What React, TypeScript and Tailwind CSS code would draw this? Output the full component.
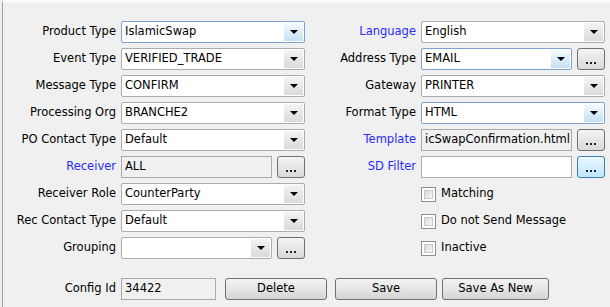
import React from 'react';

type ComboProps = { value: string; hot?: boolean; narrow?: boolean };

const Arrow = () => (
  <svg width="8" height="4" viewBox="0 0 8 4">
    <path d="M0 0H8L4 4Z" fill="#000" />
  </svg>
);

const Combo: React.FC<ComboProps> = ({ value, hot, narrow }) => (
  <div
    className={`flex h-[22px] ${narrow ? 'w-[151px]' : 'w-[184px]'} rounded-[2px] border ${
      hot ? 'border-[#7da2ce]' : 'border-[#acacac]'
    } bg-white p-px`}
  >
    <div className="flex flex-1 items-center pl-[2px] whitespace-nowrap overflow-hidden">{value}</div>
    <div
      className={`flex w-[19px] items-center justify-center bg-linear-to-b ${
        hot ? 'from-[#f6fbfe] to-[#c4e1f5]' : 'from-[#f4f4f4] to-[#dadada]'
      }`}
    >
      <Arrow />
    </div>
  </div>
);

const Dots: React.FC<{ hot?: boolean }> = ({ hot }) => (
  <div
    className={`flex h-[22px] w-[28px] items-end justify-center rounded-[3px] border pb-[5px] bg-linear-to-b ${
      hot ? 'border-[#3c7fb1] from-[#eaf6fd] to-[#bee6fd]' : 'border-[#707070] from-[#f4f4f4] to-[#d9d9d9]'
    }`}
  >
    <div className="flex gap-[2px]">
      <span className="h-[2px] w-[2px] bg-[#222]" />
      <span className="h-[2px] w-[2px] bg-[#222]" />
      <span className="h-[2px] w-[2px] bg-[#222]" />
    </div>
  </div>
);

const Field: React.FC<{ value?: string; gray?: boolean; w: string }> = ({ value, gray, w }) => (
  <div
    className={`flex h-[22px] ${w} items-center overflow-hidden whitespace-nowrap border pl-[3px] ${
      gray ? 'border-[#a9a9a9] bg-[#f0f0f0]' : 'border-[#abadb3] bg-white'
    }`}
  >
    {value}
  </div>
);

const Check: React.FC<{ label: string }> = ({ label }) => (
  <div className="flex items-center gap-[5px]">
    <div className="h-[15px] w-[15px] border border-[#8f8f8f] bg-white p-[2px]">
      <div className="h-full w-full border border-[#c8c8c8] bg-linear-to-br from-[#d9d9d9] to-[#f7f7f7]" />
    </div>
    <span>{label}</span>
  </div>
);

const Row: React.FC<{ label?: string; blue?: boolean; lw: string; children: React.ReactNode }> = ({
  label,
  blue,
  lw,
  children,
}) => (
  <div className="flex h-[22px] items-center gap-[5px]">
    <div className={`${lw} text-right ${blue ? 'text-[#2a2aff]' : ''}`}>{label}</div>
    {children}
  </div>
);

const Btn: React.FC<{ label: string; w: string }> = ({ label, w }) => (
  <div
    className={`flex h-[22px] ${w} items-center justify-center rounded-[3px] border border-[#707070] bg-linear-to-b from-[#f3f3f3] via-[#e6e6e6] to-[#d4d4d4]`}
  >
    {label}
  </div>
);

export default function App() {
  const L = 'w-[113px]';
  const R = 'w-[111px]';
  return (
    <div className="h-[307px] w-[610px] overflow-hidden bg-[#f0f0f0] font-['DejaVu_Sans',sans-serif] text-[11.5px] text-black">
      <div className="ml-[2px] h-full border-l border-t-[3px] border-l-[#a0a0a0] border-t-[#fafafa] pt-[18px]">
        <div className="flex">
          <div className="flex w-[302px] flex-col gap-[5px]">
            <Row label="Product Type" lw={L}><Combo value="IslamicSwap" hot /></Row>
            <Row label="Event Type" lw={L}><Combo value="VERIFIED_TRADE" /></Row>
            <Row label="Message Type" lw={L}><Combo value="CONFIRM" /></Row>
            <Row label="Processing Org" lw={L}><Combo value="BRANCHE2" /></Row>
            <Row label="PO Contact Type" lw={L}><Combo value="Default" /></Row>
            <Row label="Receiver" blue lw={L}>
              <Field value="ALL" gray w="w-[151px]" />
              <Dots />
            </Row>
            <Row label="Receiver Role" lw={L}><Combo value="CounterParty" /></Row>
            <Row label="Rec Contact Type" lw={L}><Combo value="Default" /></Row>
            <Row label="Grouping" lw={L}>
              <Combo value="" narrow />
              <Dots />
            </Row>
          </div>
          <div className="flex w-[302px] flex-col gap-[5px]">
            <Row label="Language" blue lw={R}><Combo value="English" /></Row>
            <Row label="Address Type" lw={R}>
              <Combo value="EMAIL" narrow hot />
              <Dots />
            </Row>
            <Row label="Gateway" lw={R}><Combo value="PRINTER" /></Row>
            <Row label="Format Type" lw={R}><Combo value="HTML" hot /></Row>
            <Row label="Template" blue lw={R}>
              <Field value="icSwapConfirmation.html" gray w="w-[151px]" />
              <Dots />
            </Row>
            <Row label="SD Filter" blue lw={R}>
              <Field w="w-[151px]" />
              <Dots hot />
            </Row>
            <Row lw={R}><Check label="Matching" /></Row>
            <Row lw={R}><Check label="Do not Send Message" /></Row>
            <Row lw={R}><Check label="Inactive" /></Row>
          </div>
        </div>
        <div className="mt-[19px] flex h-[22px] items-center">
          <div className={`${L} text-right`}>Config Id</div>
          <div className="ml-[5px]">
            <Field value="34422" gray w="w-[95px]" />
          </div>
          <div className="ml-[9px]"><Btn label="Delete" w="w-[102px]" /></div>
          <div className="ml-[8px]"><Btn label="Save" w="w-[102px]" /></div>
          <div className="ml-[5px]"><Btn label="Save As New" w="w-[107px]" /></div>
        </div>
      </div>
    </div>
  );
}
